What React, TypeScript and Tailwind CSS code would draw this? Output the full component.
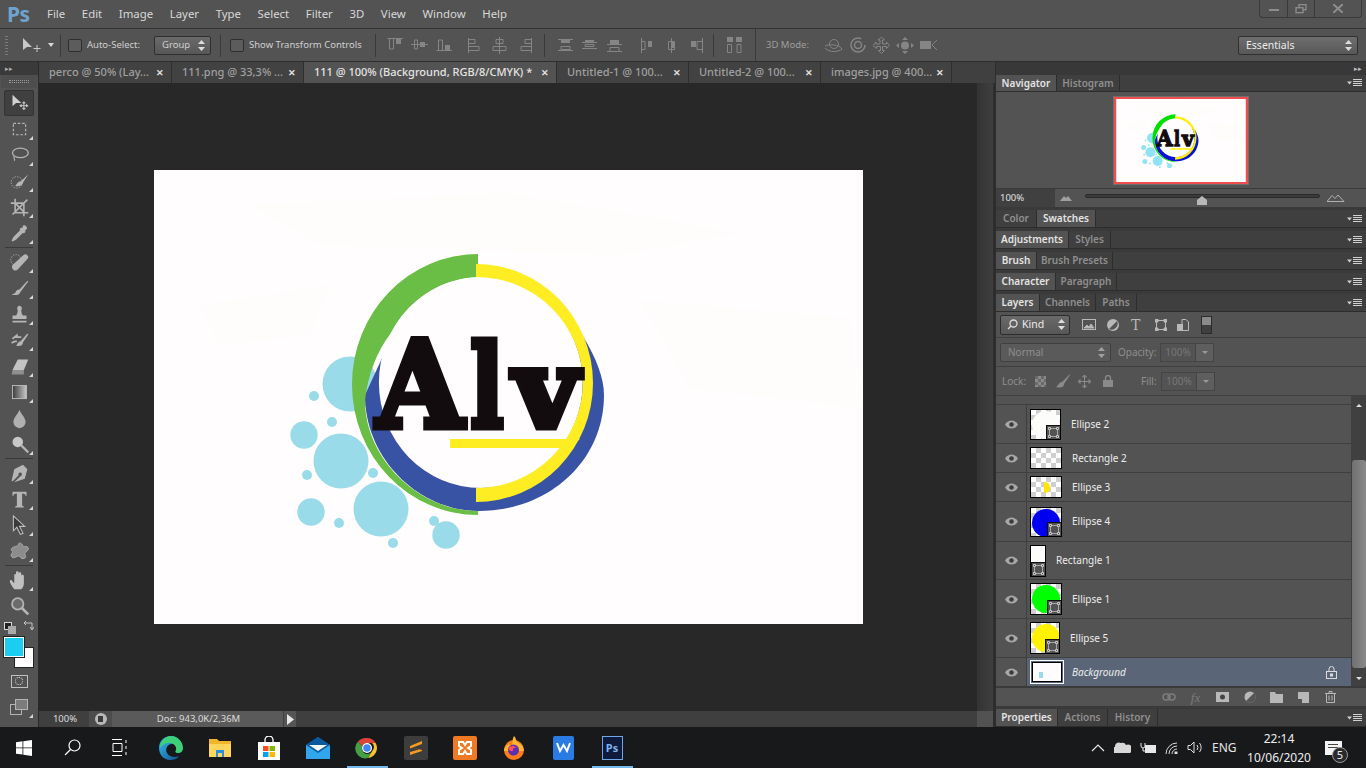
import React from 'react';

const Logo: React.FC<{ mini?: boolean }> = ({ mini }) => {
  const green = mini ? '#00e000' : '#6abd45';
  const blue = mini ? '#0a12d8' : '#3953a4';
  const yellow = mini ? '#ffee00' : '#ffed23';
  const bubble = mini ? '#8fe3f5' : '#9adbea';
  const bubbles = [
    [350, 384, 27.5], [314, 396, 5], [332, 422, 5], [304, 435, 13.7], [341, 461, 27.5], [307, 475, 5], [373, 473, 5],
    [311, 512, 13.7], [339, 523, 5], [381, 509, 27.5], [393, 543, 5], [434, 521, 5], [446, 535, 13.7],
  ];
  const ink = { fill: '#130c0e', stroke: '#130c0e', strokeWidth: 7, strokeMiterlimit: 2, fontWeight: 700, lengthAdjust: 'spacingAndGlyphs' as const };
  return (
    <svg viewBox="154 170 709 454" className="block h-full w-full font-['DejaVu_Serif',serif]">
      <rect x="154" y="170" width="709" height="454" fill="#fffdfd" />
      <path d="M250 205l260-12 230 40-120 22-300-10zM200 305l130-20-20 50-90 10zM640 300l210 18 10 90-170-20z" fill="#fefdfc" />
      {bubbles.map(([cx, cy, r]) => (
        <circle key={`${cx}-${cy}`} cx={cx} cy={cy} r={r} fill={bubble} />
      ))}
      <path d="M584 338C596 358 604 378 604 395C604 460 550 511 478 511C420 511 365 460 365 395L395 330L480 300Z" fill={blue} />
      <path d="M478 254A126 130.5 0 0 0 478 515V511C420 511 365 460 365 400Q370 360 391 333A102 105.4 0 0 1 478 277Z" fill={green} />
      <ellipse cx="480.8" cy="382.6" rx="101.9" ry="105.4" fill="#fffdfd" />
      <path d="M476 264A117 119 0 0 1 476 502V488A106.7 105.4 0 0 0 476 277Z" fill={yellow} />
      <path d="M450 439H580L568 448H450Z" fill={yellow} />
      <text x="376.5" y="426.5" textLength="87" fontSize="120" {...ink}>A</text>
      <text x="470.5" y="426.5" textLength="33" fontSize="115" {...ink}>l</text>
      <text x="513.5" y="426.5" textLength="65" fontSize="108" {...ink}>v</text>
    </svg>
  );
};

const PanelMenu: React.FC = () => (
  <svg width="15" height="8" viewBox="0 0 15 8" className="shrink-0">
    <path d="M0 2.500h5L2.500 5.500z" fill="#d0d0d0" />
    <path d="M6 .5h9M6 2.500h9M6 4.500h9M6 6.500h9" stroke="#d0d0d0" />
  </svg>
);

const PanelTabs: React.FC<{ tabs: [string, number][]; active: number; h?: string }> = ({ tabs, active, h = 'h-[18px]' }) => (
  <div className={`flex ${h} shrink-0 items-stretch border-b border-[#2d2d2d] bg-[#3f3f3f] pr-[4px]`}>
    {tabs.map(([name, w], i) => (
      <div
        key={name}
        style={{ width: w }}
        className={`flex items-center justify-center border-r border-[#2d2d2d] text-[10px] font-semibold ${
          i === active ? 'bg-[#535353] text-[#e4e4e4]' : 'text-[#8f8f8f]'
        }`}
      >
        {name}
      </div>
    ))}
    <div className="flex flex-1 items-center justify-end">
      <PanelMenu />
    </div>
  </div>
);

const alignIcons: { d: string; f: string }[] = [
  { d: 'M.5 1.500H16M2.500 2v10h4V2', f: 'M9 2h5v5H9z' },
  { d: 'M0 7.500h17M3.500 3v9h3V3z', f: 'M9 5h5v5H9z' },
  { d: 'M.5 13.500H16M2.500 13V3h4v10', f: 'M9 8h5v5H9z' },
  { d: 'M1.500 1v15M2 2.500h6v4H2M2 9.500h10v4H2', f: '' },
  { d: 'M8.500 0v17M5 2.500h7v4H5zM2 9.500h13v4H2z', f: '' },
  { d: 'M15.500 1v15M15 2.500H9v4h6M15 9.500H5v4h10', f: '' },
  { d: 'M1 2.500h15M1 13.500h15M4 9.500h9v3H4z', f: 'M4 3h9v3H4z' },
  { d: 'M1 5.500h15M1 11.500h15M4 7.500h9v2H4z', f: 'M4 3h9v2H4z' },
  { d: 'M1 7.500h15M1 14.500h15M4 10.500h9v4H4z', f: 'M4 3h9v4H4z' },
  { d: 'M2.500 1v15M3 4.500h3v8H3', f: 'M9 4h4v6H9z' },
  { d: 'M8.500 1v15M5.500 4.500h6v8h-6z', f: 'M9 5h3v6H9z' },
  { d: 'M14.500 1v15M14 4.500H9v8h5', f: 'M3 4h5v6H3z' },
];

const AlignIcon: React.FC<{ i: number }> = ({ i }) => (
  <svg width="17" height="17" viewBox="0 0 17 17" fill="none" className="shrink-0">
    <path d={alignIcons[i].d} stroke="#858585" />
    {alignIcons[i].f && <path d={alignIcons[i].f} fill="#858585" />}
  </svg>
);

const AlignGroup: React.FC<{ from: number; cls: string }> = ({ from, cls }) => (
  <div className={`flex items-center gap-[7.500px] ${cls}`}>
    <AlignIcon i={from} />
    <AlignIcon i={from + 1} />
    <AlignIcon i={from + 2} />
  </div>
);

const VSep: React.FC<{ cls?: string }> = ({ cls = 'h-[23px]' }) => <div className={`${cls} w-px shrink-0 bg-[#3a3a3a]`} />;
const Check: React.FC = () => <div className="h-[13px] w-[14px] shrink-0 rounded-[2px] border border-[#2f2f2f] bg-[#5c5c5c]" />;
const Updown: React.FC<{ c?: string }> = ({ c = '#dcdcdc' }) => (
  <svg width="7" height="11" viewBox="0 0 7 11" className="shrink-0">
    <path d="M3.500 0L7 4H0zM3.500 11L0 7h7z" fill={c} />
  </svg>
);

const Corner: React.FC = () => (
  <span className="absolute bottom-[2px] right-[1px] h-0 w-0 border-b-[4px] border-l-[4px] border-b-[#d8d8d8] border-l-transparent" />
);

const G = '#b5b5b5';
const tools: { y?: string; c?: boolean; n: React.ReactNode }[] = [
  { n: <><path d="M4 2v13l4-3.500h6z" fill="#d0d0d0" /><path d="M17 10v9M12.500 14.500h9M17 10l-1.500 1.500h3zM17 19l-1.500-1.500h3zM12.500 14.500l1.500-1.500v3zM21.500 14.500l-1.500-1.500v3z" stroke="#d0d0d0" fill="none" /></> },
  { c: true, n: <rect x="5" y="5" width="14" height="13" fill="none" stroke={G} strokeWidth="1.300" strokeDasharray="3 2" /> },
  { c: true, n: <><ellipse cx="13" cy="9" rx="9" ry="5.500" fill="none" stroke={G} strokeWidth="1.500" /><path d="M6 13c-2 2 2 3 0 5" fill="none" stroke={G} strokeWidth="1.300" /></> },
  { c: true, n: <><circle cx="9" cy="13" r="6.500" fill="none" stroke={G} strokeDasharray="1.500 1.500" /><path d="M22 4L13 12c-3 0-4 3-6 5 4 1 8 0 9-4z" fill={G} /></> },
  { c: true, n: <path d="M7 2v16h15M2 7h15v15M4 20L21 3M7 7l10 10" fill="none" stroke={G} strokeWidth="1.800" /> },
  { c: true, n: <path d="M16 3c2-2 6 2 4 4l-2 2 1 1-2 2-1-1-8 8-4 2-1-1 2-4 8-8-1-1 2-2 1 1z" fill={G} /> },
  { n: null, y: 'sep' },
  { c: true, n: <><path d="M20 3c2 1 3 3 1 5L10 20c-2 2-5 1-6-1s-1-3 1-5L16 4c1-1 3-2 4-1z" fill={G} /><circle cx="8" cy="9" r="6" fill="none" stroke={G} strokeDasharray="1.500 1.500" /></> },
  { c: true, n: <path d="M21 3L12 13c-3 0-4 2-5 4l-4 2c4 1 9 1 10-3L22 4z" fill={G} /> },
  { c: true, n: <path d="M12 2a3 3 0 0 1 2 5c0 3 1 5 2 6h4v4H4v-4h4c1-1 2-3 2-6a3 3 0 0 1 2-5zM4 19h16v2H4z" fill={G} /> },
  { c: true, n: <><path d="M21 4L13 13c-3 0-3 3-5 5 4 1 8 0 8-4l6-9z" fill={G} /><path d="M4 10l5-4v2h5M3 15c3-3 5-2 6-2" fill="none" stroke={G} strokeWidth="2" /></> },
  { c: true, n: <><path d="M10 4h12l-5 12H4z" fill="#c4c4c4" /><path d="M4 16h13v5H3z" fill="#8f8f8f" /></> },
  { c: true, n: <><defs><linearGradient id="grd"><stop stopColor="#3c3c3c" /><stop offset="1" stopColor="#c8c8c8" /></linearGradient></defs><rect x="4" y="4" width="16" height="15" fill="url(#grd)" stroke="#c0c0c0" /></> },
  { c: false, n: <path d="M12 2c1 4 7 9 7 14a7 7 0 0 1-14 0c0-5 6-10 7-14z" fill="#b0b0b0" /> },
  { c: true, n: <><circle cx="10" cy="9" r="6" fill="#c8c8c8" /><path d="M14 13l8 8" stroke={G} strokeWidth="2.500" /></> },
  { n: null, y: 'sep' },
  { c: true, n: <path d="M21 7L16 2 6 7 3 20l1 1 7-7a2 2 0 1 1 2 1l-7 7 12-4z" fill={G} /> },
  { c: true, n: <path d="M4 3h16v5h-1c0-2-1-3-4-3v14l2 1v1H7v-1l2-1V5C6 5 5 6 5 8H4z" fill={G} /> },
  { c: true, n: <path d="M5 1l0 17 4-4 4 8 3-1-4-8h6z" fill="#3a3a3a" stroke="#c0c0c0" strokeWidth="1.200" /> },
  { c: true, n: <path d="M11 3c3-2 5 2 5 3s5-1 6 2-4 5-4 6 3 5-1 6-4-3-6-3-6 4-8 1 2-5 1-6-3-3 1-5 5 0 6-4z" fill="#8c8c8c" stroke="#b0b0b0" /> },
  { n: null, y: 'sep' },
  { c: true, n: <path d="M6 22c-2-3-5-7-5-9 0-2 2-2 3 0l2 2V6c0-2 2-2 2 0v4-7c0-2 3-2 3 0v7-6c0-2 3-2 3 0v7-4c0-2 3-2 3 0v8c0 4-2 6-3 7z" fill="#c0c0c0" /> },
  { n: <><circle cx="10" cy="9" r="6.500" fill="#6c6c6c" stroke="#b4b4b4" strokeWidth="2" /><path d="M15 14l7 7" stroke={G} strokeWidth="3" /></> },
];

const ToolBar: React.FC = () => (
  <div className="flex w-[39px] shrink-0 flex-col border-r border-[#2a2a2a] bg-[#535353]">
    <div className="flex h-[13px] shrink-0 items-center bg-[#3a3a3a] pl-[5px] text-[7px] leading-none text-[#b0b0b0]">▸▸</div>
    <div className="mx-[1px] mb-[2px] flex h-[13px] shrink-0 items-center justify-center bg-[#4e4e4e]">
      <div className="h-[3px] w-[20px] border-x-0 border-y border-dotted border-[#9a9a9a]" />
    </div>
    {tools.map((t, i) =>
      t.y === 'sep' ? (
        <div key={i} className="mx-[5px] my-[1px] h-px shrink-0 bg-[#3a3a3a]" />
      ) : (
        <div key={i} className={`relative mx-[4px] flex h-[26px] shrink-0 items-center justify-center ${i === 0 ? 'rounded-[2px] border border-[#333333] bg-[#404040]' : ''}`}>
          <svg width="21" height="21" viewBox="0 0 24 24">{t.n}</svg>
          {t.c && <Corner />}
        </div>
      ),
    )}
    <div className="relative mt-px h-[48px] shrink-0">
      <div className="absolute left-[4px] top-[2px] h-[8px] w-[8px] border border-[#d8d8d8] bg-[#222222]" />
      <div className="absolute left-[8px] top-[6px] h-[8px] w-[8px] bg-[#aaaaaa]" />
      <svg width="11" height="11" viewBox="0 0 11 11" fill="none" stroke="#c4c4c4" className="absolute left-[23px] top-[1px]"><path d="M1 2h8v6M7 6l2 3 2-3M3 0L1 2l2 2" /></svg>
      <div className="absolute left-[14px] top-[27px] h-[21px] w-[20px] border border-[#222222] bg-[#fffdfd]" />
      <div className="absolute left-[4px] top-[17px] h-[20px] w-[20px] border border-white bg-[#1bcdf0] outline outline-[#222222]" />
    </div>
    <div className="flex h-[26px] shrink-0 items-center justify-center">
      <div className="flex h-[13px] w-[17px] items-center justify-center border border-[#c0c0c0]">
        <div className="h-[8px] w-[8px] rounded-full border border-dotted border-[#e0e0e0]" />
      </div>
    </div>
    <div className="relative mx-[4px] flex h-[26px] shrink-0 items-center justify-center">
      <svg width="18" height="16" viewBox="0 0 18 16"><rect x=".5" y="5.500" width="11" height="10" fill="none" stroke="#b4b4b4" /><rect x="5.500" y=".5" width="12" height="10" fill="#7c7c7c" stroke="#b4b4b4" /></svg>
      <Corner />
    </div>
  </div>
);

const docTabs: [string, number, boolean][] = [
  ['perco @ 50% (Lay...', 133, false],
  ['111.png @ 33,3% ...', 132, false],
  ['111 @ 100% (Background, RGB/8/CMYK) *', 253, true],
  ['Untitled-1 @ 100...', 132, false],
  ['Untitled-2 @ 100...', 132, false],
  ['images.jpg @ 400...', 131, false],
];

const Eye: React.FC = () => (
  <svg width="13" height="9" viewBox="0 0 13 9">
    <path d="M0 4.500C2 1.500 4 .5 6.500 .5S11 1.500 13 4.500C11 7.500 9 8.500 6.500 8.500S2 7.500 0 4.500z" fill="#a8a8a8" />
    <circle cx="6.500" cy="4.500" r="2.300" fill="#3c3c3c" />
  </svg>
);

const VectorBadge: React.FC = () => (
  <div className="absolute bottom-0 right-0 flex h-[14px] w-[14px] items-center justify-center border-l border-t border-[#111111] bg-[#535353]">
    <svg width="11" height="11" viewBox="0 0 11 11"><rect x="1.500" y="1.500" width="8" height="8" fill="none" stroke="#a8a8a8" /><path d="M.5 .5h2v2h-2zM8.500 .5h2v2h-2zM.5 8.500h2v2h-2zM8.500 8.500h2v2h-2z" fill="#535353" stroke="#c8c8c8" /></svg>
  </div>
);

const checker = 'bg-[repeating-conic-gradient(#cfcfcf_0%_25%,#ffffff_0%_50%)] bg-[length:10px_10px]';

const layers: { name: string; h: string; tw: string; th: string; blob?: string; vec?: boolean; half?: boolean }[] = [
  { name: 'Ellipse 2', h: 'h-[39px]', tw: 'w-[31px]', th: 'h-[31px]', blob: 'bg-[#fcfcfa]', vec: true },
  { name: 'Rectangle 2', h: 'h-[29px]', tw: 'w-[32px]', th: 'h-[22px]' },
  { name: 'Ellipse 3', h: 'h-[29px]', tw: 'w-[32px]', th: 'h-[22px]', half: true },
  { name: 'Ellipse 4', h: 'h-[40px]', tw: 'w-[32px]', th: 'h-[30px]', blob: 'bg-[#0000f0]', vec: true },
  { name: 'Rectangle 1', h: 'h-[38px]', tw: 'w-[16px]', th: 'h-[32px]', vec: true },
  { name: 'Ellipse 1', h: 'h-[39px]', tw: 'w-[32px]', th: 'h-[32px]', blob: 'bg-[#00ff00]', vec: true },
  { name: 'Ellipse 5', h: 'h-[39px]', tw: 'w-[30px]', th: 'h-[32px]', blob: 'bg-[#fff200]', vec: true },
];

const LayerThumb: React.FC<{ l: (typeof layers)[number] }> = ({ l }) => (
  <div className={`relative ${l.tw} ${l.th} shrink-0 overflow-hidden border border-black ${l.name === 'Rectangle 1' ? 'bg-[#fcfcfa]' : checker}`}>
    {l.blob && <div className={`absolute left-[1px] top-[1px] h-[28px] w-[28px] rounded-full ${l.blob}`} />}
    {l.half && <div className="absolute left-[13px] top-[5px] h-[11px] w-[6px] rounded-r-full bg-[#ffe600]" />}
    {l.vec && <VectorBadge />}
  </div>
);

const Taskbar: React.FC = () => {
  const cell = 'relative flex h-full w-[49px] items-center justify-center';
  const under = 'absolute bottom-0 left-[4px] right-[4px] h-[2px] bg-[#76b9ed]';
  return (
    <div className="flex h-[41px] shrink-0 items-center bg-[#17191b] text-white">
      <div className="flex h-full w-[48px] items-center justify-center">
        <svg width="16" height="16" viewBox="0 0 16 16" fill="#ffffff"><path d="M0 2.200l6.500-.9v6.200H0zM7.300 1.200L16 0v7.500H7.300zM0 8.300h6.500v6.300L0 13.700zM7.300 8.300H16V16l-8.700-1.200z" /></svg>
      </div>
      <div className="flex h-full w-[48px] items-center justify-center">
        <svg width="17" height="17" viewBox="0 0 17 17" fill="none" stroke="#ffffff" strokeWidth="1.200"><circle cx="10.500" cy="6.500" r="5.500" /><path d="M6.500 10.500L1 16" /></svg>
      </div>
      <div className="flex h-full w-[48px] items-center justify-center">
        <svg width="18" height="17" viewBox="0 0 18 17" fill="none" stroke="#ffffff"><path d="M1 .5h10M1 16.500h10M2 4.500h9v8H2zM15 1v3M15 7v3M15 13v3" /></svg>
      </div>
      <div className="w-[2.500px]" />
      <div className={cell}>
        <svg width="24" height="24" viewBox="0 0 24 24">
          <defs><linearGradient id="ed" x1="0" y1="0" x2="1" y2="1"><stop stopColor="#35c1f1" /><stop offset="1" stopColor="#114a8b" /></linearGradient></defs>
          <path d="M12 0C5 0 0 5 0 12c0 7 5 12 11 12 4 0 7-1 9-4-4 2-10 1-12-3-2-4 0-8 4-9 4-1 8 1 7 6h4C24 6 19 0 12 0z" fill="url(#ed)" />
          <path d="M12 0c6 0 12 5 12 12 0 3-2 5-5 5-3 0-3-2-2-3 1-3-2-7-6-7C6 7 3 9 1 12 1 5 6 0 12 0z" fill="#3cd178" />
        </svg>
      </div>
      <div className={cell}>
        <svg width="22" height="20" viewBox="0 0 22 20">
          <path d="M0 1h8l2 2h12v15H0z" fill="#f3b52b" /><path d="M0 6h22v13H0z" fill="#ffd65c" /><path d="M7 12h8v7H7z" fill="#2a8fdc" /><path d="M9 15h4v4H9z" fill="#ffd65c" />
        </svg>
      </div>
      <div className={cell}>
        <svg width="22" height="24" viewBox="0 0 22 24">
          <path d="M7 7V4a4 4 0 0 1 8 0v3" fill="none" stroke="#ffffff" strokeWidth="1.300" /><rect y="6" width="22" height="18" fill="#ffffff" />
          <rect x="5" y="10" width="5.500" height="5" fill="#f25022" /><rect x="11.500" y="10" width="5.500" height="5" fill="#7fba00" /><rect x="5" y="16" width="5.500" height="5" fill="#00a4ef" /><rect x="11.500" y="16" width="5.500" height="5" fill="#ffb900" />
        </svg>
      </div>
      <div className={cell}>
        <svg width="24" height="22" viewBox="0 0 24 22">
          <path d="M12 0l12 8v14H0V8z" fill="#0f6cbd" /><path d="M0 8h24v14H0z" fill="#32a6ec" /><path d="M0 8l12 8 12-8-12-8z" fill="#0c5a9e" /><path d="M3 8h18l-9 6z" fill="#f4fbff" />
        </svg>
      </div>
      <div className={cell}>
        <svg width="24" height="24" viewBox="0 0 48 48">
          <path d="M24 4a20 20 0 0 1 17.300 10H24a10 10 0 0 0-9.500 7L6 11A20 20 0 0 1 24 4z" fill="#db4437" />
          <path d="M41.300 14A20 20 0 0 1 26 44l9-15a10 10 0 0 0-1-15z" fill="#fbc02d" />
          <path d="M6 11a20 20 0 0 0 20 33l9-15a10 10 0 0 1-20.500-8z" fill="#43a047" />
          <circle cx="24" cy="24" r="10" fill="#ffffff" /><circle cx="24" cy="24" r="7.500" fill="#4285f4" />
        </svg>
        <div className={under} />
      </div>
      <div className={cell}>
        <div className="flex h-[24px] w-[24px] items-center justify-center rounded-[2px] bg-[#3d3d3d]">
          <svg width="14" height="16" viewBox="0 0 14 16" fill="#f59a23"><path d="M13 1v3L1 8.500V6zM1 7l12 3v-.5L13 11 1 15v-3l9-2.500L1 7z" /></svg>
        </div>
      </div>
      <div className={cell}>
        <div className="flex h-[24px] w-[24px] items-center justify-center rounded-[2px] bg-[#f07a22]">
          <svg width="18" height="18" viewBox="0 0 18 18" fill="none" stroke="#ffffff" strokeWidth="2"><path d="M3 3h4l2 3 2-3h4v4l-3 2 3 2v4h-4l-2-3-2 3H3v-4l3-2-3-2z" /></svg>
        </div>
      </div>
      <div className={cell}>
        <svg width="24" height="24" viewBox="0 0 24 24">
          <circle cx="12" cy="14" r="10" fill="#ff7a18" /><path d="M12 0c3 3 1 5 5 7 4 3 5 6 5 8H2c0-4 3-6 5-7 1 1 1 2 3 1 1-3 0-6 2-9z" fill="#ffb52e" /><circle cx="11.500" cy="14" r="5.500" fill="#5b2fb5" /><path d="M6 12c2-2 6-3 9 0-2-1-4 0-4 2s-3 2-5-2z" fill="#ff4f5e" />
        </svg>
      </div>
      <div className={cell}>
        <div className="flex h-[24px] w-[21px] items-center justify-center rounded-[2px] bg-[#2a7be4]">
          <svg width="15" height="11" viewBox="0 0 15 11" fill="none" stroke="#ffffff" strokeWidth="2"><path d="M1 1l3 8 3.500-6L11 9l3-8" /></svg>
        </div>
      </div>
      <div className={cell}>
        <div className="flex h-[24px] w-[21px] items-center justify-center border border-[#6fa8e8] bg-[#0e1b3d] text-[11px] font-bold leading-none text-[#7fb5f0]">Ps</div>
        <div className={under} />
      </div>
      <div className="flex-1" />
      <svg width="14" height="8" viewBox="0 0 14 8" fill="none" stroke="#e8e8e8" strokeWidth="1.200" className="mr-[9px]"><path d="M1 7l6-6 6 6" /></svg>
      <svg width="17" height="11" viewBox="0 0 17 11" fill="#d8d8d8" className="mr-[9px]"><path d="M1 11a3 3 0 0 1 0-6 4 4 0 0 1 6-4 4 4 0 0 1 5 2 4 4 0 0 1 4 8z" /></svg>
      <svg width="16" height="12" viewBox="0 0 16 12" fill="none" stroke="#e8e8e8" className="mr-[9px]"><rect x="5.500" y="3.500" width="10" height="7" fill="#e8e8e8" /><path d="M1 1v3a2 2 0 0 0 4 0V1M3 6v3h2" /></svg>
      <svg width="13" height="12" viewBox="0 0 13 12" fill="none" stroke="#d8d8d8" className="mr-[9px]"><path d="M1 12A11 11 0 0 1 12 1M4 12A8 8 0 0 1 12 4M7 12a5 5 0 0 1 5-5" /><rect x="10" y="10" width="2" height="2" fill="#ffffff" /></svg>
      <svg width="16" height="13" viewBox="0 0 16 13" fill="none" stroke="#e0e0e0" className="mr-[9px]"><path d="M1 4.500h2.500L7 1v11L3.500 8.500H1zM10 4a4 4 0 0 1 0 5M12.500 2a7 7 0 0 1 0 9" /></svg>
      <span className="w-[24px] text-[12px] leading-none text-[#e6e6e6]">ENG</span>
      <div className="ml-[14px] flex w-[58px] flex-col items-center text-[12px] leading-[19px] text-[#eeeeee]">
        <span>22:14</span>
        <span>10/06/2020</span>
      </div>
      <div className="relative ml-[17px] mr-[24px] h-[14px] w-[17px] bg-[#f4f4f4] pl-[3px] pt-[3px]">
        <div className="h-[1px] w-[10px] bg-[#444444]" />
        <div className="mt-[2px] h-[1px] w-[10px] bg-[#444444]" />
        <div className="absolute left-[7px] top-[6px] flex h-[16px] w-[16px] items-center justify-center rounded-full border border-[#999999] bg-[#2a2a2a] text-[11px] leading-none text-[#eeeeee]">5</div>
      </div>
    </div>
  );
};

export default function App() {
  return (
    <div className="flex h-screen w-screen flex-col overflow-hidden bg-[#535353] font-['Noto_Sans',sans-serif] text-[#d8d8d8]">
      {/* menu bar */}
      <div className="flex h-[29px] shrink-0 items-center border-b border-[#333333]">
        <span className="ml-[7px] mr-[20px] w-[20px] text-[21px] font-bold leading-none tracking-tight text-[#6fa3cf]">Ps</span>
        <div className="flex gap-[16.600px] text-[11.400px] text-[#d8d8d8]">
          {['File', 'Edit', 'Image', 'Layer', 'Type', 'Select', 'Filter', '3D', 'View', 'Window', 'Help'].map((m) => (
            <span key={m}>{m}</span>
          ))}
        </div>
        <div className="ml-auto mr-[4px] flex h-[18px] self-start rounded-b-[4px] border border-t-0 border-[#3a3a3a] text-[#8e8e8e]">
          <div className="flex w-[28px] items-center justify-center border-r border-[#3a3a3a]"><div className="mt-[3px] h-[2px] w-[10px] bg-[#8e8e8e]" /></div>
          <div className="flex w-[27px] items-center justify-center border-r border-[#3a3a3a]">
            <svg width="12" height="10" viewBox="0 0 12 10" fill="none" stroke="#8e8e8e" strokeWidth="1.300"><rect x="4" y=".7" width="7" height="5" /><rect x="1" y="3.700" width="7" height="5" fill="#535353" /></svg>
          </div>
          <div className="flex w-[46px] items-center justify-center">
            <svg width="10" height="9" viewBox="0 0 10 9" stroke="#8e8e8e" strokeWidth="2"><path d="M0 0l10 9M10 0L0 9" /></svg>
          </div>
        </div>
      </div>

      {/* options bar */}
      <div className="flex h-[33px] shrink-0 items-center border-b border-[#2e2e2e] text-[9.500px] text-[#d0d0d0]">
        <div className="ml-[5px] h-[19px] w-[3px] bg-[repeating-linear-gradient(#7a7a7a_0_1px,transparent_1px_3px)]" />
        <svg width="20" height="16" viewBox="0 0 20 16" className="ml-[15px] shrink-0">
          <path d="M0 1v12l4-3h5z" fill="#c8c8c8" /><path d="M14 8v7M10.500 11.500h7" stroke="#c8c8c8" />
        </svg>
        <svg width="6" height="4" viewBox="0 0 6 4" className="ml-[5px] shrink-0"><path d="M0 0h6L3 4z" fill="#d8d8d8" /></svg>
        <div className="ml-[6px] mr-[7px]"><VSep /></div>
        <Check />
        <span className="ml-[5px] w-[57px] whitespace-nowrap">Auto-Select:</span>
        <div className="ml-[10px] flex h-[19px] w-[57px] items-center justify-between rounded-[2px] border border-[#2f2f2f] bg-gradient-to-b from-[#6a6a6a] to-[#575757] pl-[7px] pr-[5px]">
          <span>Group</span>
          <Updown />
        </div>
        <div className="ml-[9px] mr-[9px]"><VSep /></div>
        <Check />
        <span className="ml-[5px] w-[116px] whitespace-nowrap">Show Transform Controls</span>
        <div className="ml-[10px]"><VSep /></div>
        <AlignGroup from={0} cls="ml-[10.500px]" />
        <AlignGroup from={3} cls="ml-[14px]" />
        <div className="ml-[11.500px]"><VSep /></div>
        <AlignGroup from={6} cls="ml-[11.500px]" />
        <AlignGroup from={9} cls="ml-[16px]" />
        <div className="ml-[8.500px]"><VSep /></div>
        <svg width="17" height="16" viewBox="0 0 17 16" fill="#858585" className="ml-[12px] shrink-0"><path d="M1 0h6v5H1zM10 0h6v5h-6z" /><path d="M1.500 7.500h4v8h-4zM11 7.500h4v8h-4z" fill="none" stroke="#858585" /></svg>
        <div className="ml-[12px]"><VSep cls="h-[32px]" /></div>
        <span className="ml-[10px] w-[58px] whitespace-nowrap text-[#9e9e9e]">3D Mode:</span>
        <div className="flex items-center gap-[6px]">
          <svg width="19" height="15" viewBox="0 0 19 15" fill="none" stroke="#858585"><circle cx="10" cy="6" r="4.500" /><path d="M1 8c4-2 14-2 17 3-3 3-13 4-17-1" /></svg>
          <svg width="16" height="16" viewBox="0 0 16 16" fill="none" stroke="#858585" strokeWidth="1.500" className="ml-[1px]"><circle cx="8" cy="8" r="7" strokeDasharray="36 8" /><circle cx="8" cy="8" r="3.500" /></svg>
          <svg width="17" height="17" viewBox="0 0 17 17" fill="none" stroke="#858585" className="ml-[1px]"><path d="M8.500 0l3 3h-2v4h4V5l3 3.500-3 3v-2h-4v4h2l-3 3-3-3h2v-4h-4v2L0 8.500 3 5v2h4V3h-2z" /></svg>
          <svg width="18" height="17" viewBox="0 0 18 17" fill="#858585"><path d="M9 0l3 3H6zM9 17l-3-3h6zM0 8.500L3 6v5zM18 8.500L15 11V6z" /><circle cx="9" cy="8.500" r="4" /></svg>
          <svg width="18" height="10" viewBox="0 0 18 10" fill="none" stroke="#858585"><rect x=".5" y="1.500" width="10" height="7" fill="#858585" /><path d="M17 0l-5 5 5 5" /></svg>
        </div>
        <div className="ml-auto mr-[8px] flex h-[19px] w-[120px] items-center justify-between rounded-[2px] border border-[#2f2f2f] bg-gradient-to-b from-[#6e6e6e] to-[#585858] pl-[7px] pr-[5px] text-[10.500px] text-[#ececec]">
          <span className="pt-px">Essentials</span>
          <Updown />
        </div>
      </div>

      {/* workspace */}
      <div className="flex h-[665px] shrink-0">
        <ToolBar />

        <div className="flex w-[956px] shrink-0 flex-col">
          <div className="flex h-[21px] shrink-0 bg-[#404040]">
            {docTabs.map(([name, w, active]) => (
              <div
                key={name}
                style={{ width: w }}
                className={`flex shrink-0 items-center justify-between border-r border-[#2f2f2f] pl-[10px] pr-[7px] text-[11px] font-medium ${
                  active ? 'bg-[#535353] text-[#e4e4e4]' : 'bg-[#424242] text-[#a0a0a0]'
                }`}
              >
                <span className="whitespace-nowrap">{name}</span>
                <span className="text-[9px] font-bold leading-none text-[#e0e0e0]">✕</span>
              </div>
            ))}
          </div>
          <div className="flex h-[628px] shrink-0 bg-[#282828]">
            <div className="flex-1 pl-[115px] pt-[87px]">
              <div className="h-[454px] w-[709px]">
                <Logo />
              </div>
            </div>
            <div className="w-[18px] shrink-0 border-r-2 border-[#2d2d2d] bg-gradient-to-r from-[#333333] to-[#3f3f3f]" />
          </div>
          <div className="flex h-[16px] shrink-0 items-stretch bg-[#3f3f3f] text-[9.500px] text-[#dcdcdc]">
            <div className="flex w-[50px] items-center justify-center bg-[#3f3f3f] pl-[2px] pt-px">100%</div>
            <div className="flex w-[23px] items-center justify-center bg-[#4c4c4c]">
              <div className="flex h-[12px] w-[12px] items-center justify-center rounded-full bg-[#b8b8b8]"><div className="h-[6px] w-[5px] bg-[#3a3a3a]" /></div>
            </div>
            <div className="flex w-[171px] items-center justify-center bg-[#5a5a5a] pl-[2px] pt-px">Doc: 943,0K/2,36M</div>
            <div className="ml-px flex w-[12px] items-center justify-center bg-[#555555]">
              <svg width="7" height="11" viewBox="0 0 7 11"><path d="M0 0l7 5.500L0 11z" fill="#e8e8e8" /></svg>
            </div>
            <div className="flex-1" />
            <div className="w-[16px] bg-[#525252]" />
            <div className="w-[2px] bg-[#2d2d2d]" />
          </div>
        </div>

        {/* right dock */}
        <div className="flex w-[371px] shrink-0 flex-col border-l border-[#2d2d2d]">
          <div className="flex h-[13px] shrink-0 items-center justify-end bg-[#383838] pr-[4px] text-[7px] leading-none text-[#c0c0c0]">▸▸</div>
          <PanelTabs h="h-[17px]" tabs={[['Navigator', 61], ['Histogram', 63]]} active={0} />
          <div className="flex h-[96px] shrink-0 justify-center pt-[5px]">
            <div className="h-[87px] w-[134px] border-[2px] border-[#f24c4c] outline outline-[#6e6e6e]">
              <Logo mini />
            </div>
          </div>
          <div className="flex h-[20px] shrink-0 items-center border-y border-[#3a3a3a] pr-[3px]">
            <div className="flex h-full w-[59px] items-center bg-[#404040] pl-[4px] text-[9.500px] text-[#e0e0e0]">100%</div>
            <svg width="12" height="6" viewBox="0 0 12 6" className="ml-[5px]" fill="#a0a0a0"><path d="M0 6l4-5 2 2 2-2 4 5z" /></svg>
            <div className="relative ml-[13px] mt-[5px] h-[4px] w-[235px] self-start rounded-full border border-[#2a2a2a] bg-[#3a3a3a]">
              <div className="absolute left-[111px] top-[1px] h-[9px] w-[10px] bg-[#b8b8b8] [clip-path:polygon(50%_0,100%_45%,100%_100%,0_100%,0_45%)]" />
            </div>
            <svg width="18" height="8" viewBox="0 0 18 8" className="ml-[7px]" fill="none" stroke="#b0b0b0"><path d="M0 7.500l5-6 3 3 3-3.500 6 6.500z" /></svg>
          </div>
          <div className="h-[2px] shrink-0 bg-[#3a3a3a]" />
          <div className="h-[21px] shrink-0 bg-[#3a3a3a]"><PanelTabs tabs={[['Color', 41], ['Swatches', 59]]} active={1} /></div>
          <div className="h-[21px] shrink-0 bg-[#3a3a3a]"><PanelTabs tabs={[['Adjustments', 73], ['Styles', 42]]} active={0} /></div>
          <div className="h-[21px] shrink-0 bg-[#3a3a3a]"><PanelTabs tabs={[['Brush', 41], ['Brush Presets', 76]]} active={0} /></div>
          <div className="h-[21px] shrink-0 bg-[#3a3a3a]"><PanelTabs tabs={[['Character', 60], ['Paragraph', 61]]} active={0} /></div>
          <PanelTabs tabs={[['Layers', 44], ['Channels', 56], ['Paths', 41]]} active={0} />

          <div className="flex h-[26px] shrink-0 items-center border-b border-[#3f3f3f] pl-[4px] text-[10.500px]">
            <div className="flex h-[20px] w-[70px] items-center rounded-[2px] border border-[#2c2c2c] bg-gradient-to-b from-[#6a6a6a] to-[#575757] pl-[6px] pr-[4px]">
              <svg width="11" height="11" viewBox="0 0 11 11" fill="none" stroke="#dcdcdc" strokeWidth="1.300"><circle cx="6.500" cy="4.500" r="3.500" /><path d="M4 7l-3 3" /></svg>
              <span className="ml-[4px] flex-1 text-[#ececec]">Kind</span>
              <Updown />
            </div>
            <div className="ml-[12px] flex items-center gap-[10px]">
              <svg width="14" height="11" viewBox="0 0 14 11" fill="none" stroke="#b8b8b8"><rect x=".5" y=".5" width="13" height="10" /><path d="M2 9l3-3 2 2 2-3 3 4z" fill="#b8b8b8" /></svg>
              <svg width="12" height="12" viewBox="0 0 12 12" fill="#b8b8b8" className="ml-[1px]"><circle cx="6" cy="6" r="6" /><path d="M10 2a6 6 0 0 1-8 8z" fill="#555555" /></svg>
              <span className="ml-[2px] w-[14px] font-['DejaVu_Serif',serif] text-[14px] leading-none text-[#b8b8b8]">T</span>
              <svg width="12" height="12" viewBox="0 0 12 12" fill="none" stroke="#b8b8b8"><rect x="1.500" y="1.500" width="9" height="9" /><path d="M0 0h3v3H0zM9 0h3v3H9zM0 9h3v3H0zM9 9h3v3H9z" fill="#b8b8b8" /></svg>
              <svg width="12" height="12" viewBox="0 0 12 12" fill="none" stroke="#b8b8b8"><path d="M5 .5h4l2.500 2.500v8.500H5z" /><rect x="0" y="5" width="6" height="7" fill="#b8b8b8" stroke="none" /></svg>
            </div>
            <div className="ml-[12px] flex h-[18px] w-[11px] flex-col border border-[#2c2c2c]">
              <div className="h-1/2 bg-[#8a8a8a]" />
              <div className="h-1/2 bg-[#3f3f3f]" />
            </div>
          </div>

          <div className="flex h-[29px] shrink-0 items-center border-b border-[#3f3f3f] pl-[4px] text-[10px] text-[#8e8e8e]">
            <div className="flex h-[19px] w-[111px] items-center justify-between rounded-[2px] border border-[#404040] bg-[#5a5a5a] pl-[7px] pr-[5px]">
              <span>Normal</span>
              <Updown c="#a0a0a0" />
            </div>
            <span className="ml-[7px] w-[42px] whitespace-nowrap">Opacity:</span>
            <div className="flex h-[19px] w-[54px] items-stretch border border-[#444444] text-[#777777]">
              <span className="flex w-[34px] items-center justify-center">100%</span>
              <span className="flex flex-1 items-center justify-center border-l border-[#444444] bg-[#5e5e5e]">
                <svg width="6" height="3" viewBox="0 0 6 3"><path d="M0 0h6L3 3z" fill="#9a9a9a" /></svg>
              </span>
            </div>
          </div>

          <div className="flex h-[29px] shrink-0 items-center border-b border-[#3f3f3f] pl-[6px] text-[10px] text-[#8e8e8e]">
            <span className="w-[33px]">Lock:</span>
            <div className="h-[11px] w-[11px] bg-[repeating-conic-gradient(#8a8a8a_0%_25%,#6a6a6a_0%_50%)] bg-[length:6px_6px]" />
            <svg width="16" height="14" viewBox="0 0 16 14" fill="#8a8a8a" className="ml-[9px]"><path d="M15 0L7 8c-3 0-3 3-6 5 4 1 8 1 8-3l6-9z" /></svg>
            <svg width="13" height="13" viewBox="0 0 13 13" fill="none" stroke="#8a8a8a" className="ml-[7px]"><path d="M6.500 0v13M0 6.500h13M6.500 0l-2 2h4zM6.500 13l-2-2h4zM0 6.500l2-2v4zM13 6.500l-2-2v4z" /></svg>
            <svg width="10" height="12" viewBox="0 0 10 12" fill="#8a8a8a" className="ml-[12px]"><path d="M2.500 5V3a2.500 2.500 0 0 1 5 0v2" fill="none" stroke="#8a8a8a" strokeWidth="1.300" /><rect y="5" width="10" height="7" /></svg>
            <span className="ml-[28px] w-[20px]">Fill:</span>
            <div className="flex h-[19px] w-[54px] items-stretch border border-[#444444] text-[#777777]">
              <span className="flex w-[34px] items-center justify-center">100%</span>
              <span className="flex flex-1 items-center justify-center border-l border-[#444444] bg-[#5e5e5e]">
                <svg width="6" height="3" viewBox="0 0 6 3"><path d="M0 0h6L3 3z" fill="#9a9a9a" /></svg>
              </span>
            </div>
          </div>

          {/* layer list */}
          <div className="flex h-[291px] shrink-0 border-b border-[#3a3a3a]">
            <div className="flex flex-1 flex-col">
              <div className="h-[9px] shrink-0 border-b border-[#3f3f3f]" />
              {layers.map((l) => (
                <div key={l.name} className={`flex ${l.h} shrink-0 items-center border-b border-[#3f3f3f] text-[10px] text-[#ececec]`}>
                  <div className="flex h-full w-[31px] shrink-0 items-center justify-center border-r border-[#3f3f3f]"><Eye /></div>
                  <div className="ml-[3px]"><LayerThumb l={l} /></div>
                  <span className="ml-[10px]">{l.name}</span>
                </div>
              ))}
              <div className="flex flex-1 items-center text-[10px] italic text-[#ececec]">
                <div className="flex h-full w-[31px] shrink-0 items-center justify-center border-r border-[#3f3f3f]"><Eye /></div>
                <div className="flex h-full flex-1 items-center bg-[#5a6678] pr-[14px]">
                  <div className="ml-[3px] h-[24px] w-[34px] border border-white p-px">
                    <div className="relative h-full w-full border border-black bg-[#fefcfc]">
                      <div className="absolute left-[6px] top-[9px] h-[6px] w-[4px] bg-[#9adbea]" />
                    </div>
                  </div>
                  <span className="ml-[8px]">Background</span>
                  <svg width="11" height="13" viewBox="0 0 11 13" fill="none" stroke="#dcdcdc" className="ml-auto"><rect x=".5" y="5.500" width="10" height="7" /><path d="M3 5V3a2.500 2.500 0 0 1 5 0v2" /><rect x="4.500" y="8" width="2" height="2" fill="#dcdcdc" /></svg>
                </div>
              </div>
            </div>
            <div className="flex w-[15px] shrink-0 flex-col items-center bg-[#404040]">
              <svg width="6" height="3" viewBox="0 0 6 3" className="mt-[8px] shrink-0"><path d="M3 0l3 3H0z" fill="#e0e0e0" /></svg>
              <div className="mt-[53px] h-[208px] w-[14px] shrink-0 rounded-[3px] bg-gradient-to-r from-[#707070] to-[#8a8a8a]" />
              <svg width="6" height="3" viewBox="0 0 6 3" className="mt-[9px] shrink-0"><path d="M0 0h6L3 3z" fill="#e0e0e0" /></svg>
            </div>
          </div>

          <div className="flex h-[20px] shrink-0 items-center justify-end border-y border-[#3a3a3a] pr-[22px]">
            {[
              <svg key="a" width="14" height="8" viewBox="0 0 14 8" fill="none" stroke="#7c7c7c" strokeWidth="1.500"><rect x="1" y="1" width="7" height="6" rx="3" /><rect x="6" y="1" width="7" height="6" rx="3" /></svg>,
              <span key="b" className="font-['Liberation_Serif',serif] text-[13px] italic leading-none text-[#7c7c7c]">fx</span>,
              <svg key="c" width="13" height="10" viewBox="0 0 13 10"><rect width="13" height="10" fill="#b8b8b8" /><circle cx="6.500" cy="5" r="2.500" fill="#444444" /></svg>,
              <svg key="d" width="12" height="12" viewBox="0 0 12 12" fill="#b8b8b8"><circle cx="6" cy="6" r="5.500" /><path d="M10 2a5.500 5.500 0 0 1-8 8z" fill="#555555" /></svg>,
              <svg key="e" width="13" height="11" viewBox="0 0 13 11" fill="#b8b8b8"><path d="M0 0h5l1 2h7v9H0z" /></svg>,
              <svg key="f" width="11" height="11" viewBox="0 0 11 11" fill="#b8b8b8"><path d="M0 0h11v11H4V7H0z" /></svg>,
              <svg key="g" width="11" height="12" viewBox="0 0 11 12" fill="none" stroke="#b8b8b8"><path d="M0 2.500h11M4 2.500V.5h3v2M1.500 2.500h8v9h-8zM4 4.500v5M7 4.500v5" /></svg>,
            ].map((icon, i) => (
              <div key={i} className="flex w-[27px] justify-center">{icon}</div>
            ))}
          </div>
          <div className="h-[2px] shrink-0 bg-[#3a3a3a]" />
          <PanelTabs h="h-[18px]" tabs={[['Properties', 62], ['Actions', 50], ['History', 50]]} active={0} />
        </div>
      </div>

      <Taskbar />
    </div>
  );
}
